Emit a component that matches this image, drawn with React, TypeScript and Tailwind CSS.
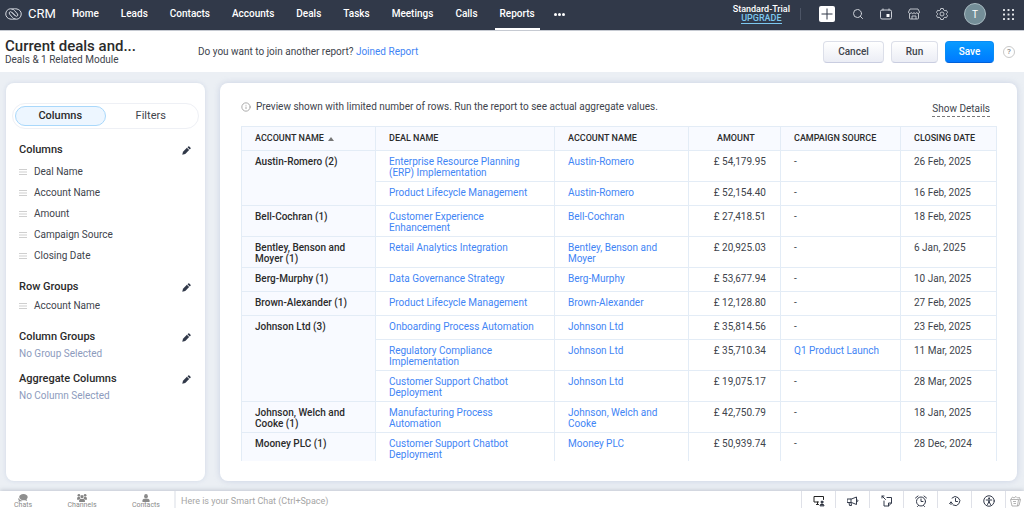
import { useState } from 'react';
import type { ReactNode } from 'react';
import clsx from 'clsx';
import { Search, Info } from 'lucide-react';

const navItems = ['Home', 'Leads', 'Contacts', 'Accounts', 'Deals', 'Tasks', 'Meetings', 'Calls', 'Reports'];

const reportColumns = ['Deal Name', 'Account Name', 'Amount', 'Campaign Source', 'Closing Date'];

type Deal = {
    name: string;
    account: string;
    amount: string;
    campaign?: string;
    date: string;
};

const groups: { label: string; deals: Deal[] }[] = [
    {
        label: 'Austin-Romero (2)',
        deals: [
            { name: 'Enterprise Resource Planning (ERP) Implementation', account: 'Austin-Romero', amount: '£ 54,179.95', date: '26 Feb, 2025' },
            { name: 'Product Lifecycle Management', account: 'Austin-Romero', amount: '£ 52,154.40', date: '16 Feb, 2025' },
        ],
    },
    {
        label: 'Bell-Cochran (1)',
        deals: [{ name: 'Customer Experience Enhancement', account: 'Bell-Cochran', amount: '£ 27,418.51', date: '18 Feb, 2025' }],
    },
    {
        label: 'Bentley, Benson and Moyer (1)',
        deals: [{ name: 'Retail Analytics Integration', account: 'Bentley, Benson and Moyer', amount: '£ 20,925.03', date: '6 Jan, 2025' }],
    },
    {
        label: 'Berg-Murphy (1)',
        deals: [{ name: 'Data Governance Strategy', account: 'Berg-Murphy', amount: '£ 53,677.94', date: '10 Jan, 2025' }],
    },
    {
        label: 'Brown-Alexander (1)',
        deals: [{ name: 'Product Lifecycle Management', account: 'Brown-Alexander', amount: '£ 12,128.80', date: '27 Feb, 2025' }],
    },
    {
        label: 'Johnson Ltd (3)',
        deals: [
            { name: 'Onboarding Process Automation', account: 'Johnson Ltd', amount: '£ 35,814.56', date: '23 Feb, 2025' },
            { name: 'Regulatory Compliance Implementation', account: 'Johnson Ltd', amount: '£ 35,710.34', campaign: 'Q1 Product Launch', date: '11 Mar, 2025' },
            { name: 'Customer Support Chatbot Deployment', account: 'Johnson Ltd', amount: '£ 19,075.17', date: '28 Mar, 2025' },
        ],
    },
    {
        label: 'Johnson, Welch and Cooke (1)',
        deals: [{ name: 'Manufacturing Process Automation', account: 'Johnson, Welch and Cooke', amount: '£ 42,750.79', date: '18 Jan, 2025' }],
    },
    {
        label: 'Mooney PLC (1)',
        deals: [{ name: 'Customer Support Chatbot Deployment', account: 'Mooney PLC', amount: '£ 50,939.74', date: '28 Dec, 2024' }],
    },
];

function Logo() {
    return (
        <svg width="17" height="12" viewBox="0 0 34 24" fill="none" stroke="#d5d9e0" strokeWidth="2" strokeLinecap="round">
            <path d="M20 21.5C17 23 13 22.600 10 22C5 21 1.500 17 1.500 12C1.500 6 6 1.500 11.500 1.500C15 1.500 17 3 19 5L25 12C27 15 24 18 21 16L14 9" />
            <path d="M14 2.500C17 1 21 1.400 24 2C29 3 32.500 7 32.500 12C32.500 18 28 22.500 22.500 22.500C19 22.500 17 21 15 19L9 12C7 9 10 6 13 8L20 15" />
        </svg>
    );
}

function PencilIcon() {
    return (
        <svg width="9" height="9" viewBox="0 0 18 18" fill="#313949">
            <path d="M.5 17.500l1.500-6L9.800 3.700l4.500 4.500L6.500 16z" />
            <path d="M11 2.500l1.500-1.500a1.500 1.500 0 0 1 2.100 0l2.400 2.400a1.500 1.500 0 0 1 0 2.100l-1.500 1.500z" />
        </svg>
    );
}

function CalendarIcon() {
    return (
        <svg width="12" height="12" viewBox="0 0 24 24" fill="none" stroke="#cdd1d8" strokeWidth="2">
            <rect x="1" y="4" width="22" height="18" rx="3" />
            <path d="M6 1v4M18 1v4" />
            <rect x="14" y="13" width="4" height="4" fill="#fff" stroke="#fff" />
        </svg>
    );
}

function MarketplaceIcon() {
    return (
        <svg width="12" height="12" viewBox="0 0 24 24" fill="none" stroke="#cdd1d8" strokeWidth="1.800" strokeLinejoin="round">
            <path d="M4 2h16l3 6c0 4-5 4-5.500 1C17 12 12.500 12 12 9c-.5 3-5 3-5.500 0C6 12 1 12 1 8z" />
            <path d="M3 11v9a2 2 0 0 0 2 2h14a2 2 0 0 0 2-2v-9M8 22v-6h8v6" />
        </svg>
    );
}

function GearIcon() {
    return (
        <svg width="12" height="12" viewBox="0 0 24 24" fill="none" stroke="#cdd1d8" strokeWidth="1.800" strokeLinejoin="round">
            <path d="M9.500 1h5l.8 3 2.500 1.500 3-.8 2.400 4.200L21 11v2l2.200 2.100-2.400 4.200-3-.8-2.500 1.500-.8 3h-5l-.8-3-2.500-1.500-3 .8L.8 15.100 3 13v-2L.8 8.900l2.400-4.200 3 .8L8.700 4z" />
            <circle cx="12" cy="12" r="4" />
        </svg>
    );
}

function GridIcon() {
    const dots = [0, 9, 18];
    return (
        <svg width="11" height="11" viewBox="0 0 22 22" fill="#e3e6ea">
            {dots.map((y) => dots.map((x) => <rect key={`${x}-${y}`} x={x} y={y} width="4" height="4" rx="1" />))}
        </svg>
    );
}

function HandleIcon() {
    return (
        <svg width="8" height="6" viewBox="0 0 8 6" stroke="#cfcfcf" strokeWidth="1">
            <path d="M0 .5h8M0 3h8M0 5.500h8" />
        </svg>
    );
}

function ChatsIcon() {
    return (
        <svg width="10" height="8" viewBox="0 0 22 18" fill="#8f8f8f">
            <path d="M12 0c5.500 0 9.500 3 9.500 7 0 2.500-1 4-2.500 5l1.500 4-5-2.200c-7 1.400-13-1.800-13-6.800C2.500 3 6.500 0 12 0z" />
            <path d="M1.500 9c1.500 4 5 6 9 6-1.500 1.500-4 1.800-6 1.200L.8 17.800l1-3.300C0 12.500 0 10.500 1.500 9z" />
        </svg>
    );
}

function ChannelsIcon() {
    return (
        <svg width="10" height="8" viewBox="0 0 22 18" fill="#858585">
            <circle cx="4" cy="3" r="3" />
            <circle cx="18" cy="3" r="3" />
            <circle cx="11" cy="6" r="3.600" />
            <path d="M0 13V9.500C0 8 1.500 7 3 7h3l1.500 3.500L4 13zM22 13V9.500C22 8 20.500 7 19 7h-3l-1.500 3.500L18 13z" />
            <path d="M4.500 18v-3c0-2.500 2-4 4-4h5c2 0 4 1.500 4 4v3z" />
        </svg>
    );
}

function ContactsIcon() {
    return (
        <svg width="8" height="8" viewBox="0 0 18 18" fill="#8a8a8a">
            <ellipse cx="9" cy="5" rx="4.200" ry="5" />
            <path d="M1 18v-3.500C1 12 3.500 10.500 6 10.500h6c2.500 0 5 1.500 5 4V18z" />
        </svg>
    );
}

// Shared frame for the line icons in the bottom bar
function ToolIcon({ children }: { children: ReactNode }) {
    return (
        <svg width="12" height="12" viewBox="0 0 24 24" fill="none" stroke="#333a4a" strokeWidth="2" strokeLinecap="round" strokeLinejoin="round">
            {children}
        </svg>
    );
}

const tools: { label: string; icon: ReactNode }[] = [
    {
        label: 'Screen share',
        icon: (
            <ToolIcon>
                <path d="M11 14H2V3h19v6M7 19h4M9 14v5" stroke="#222" />
                <circle cx="18" cy="14" r="2" fill="#222" />
                <path d="M14 21c0-2 2-3 4-3s4 1 4 3z" fill="#222" />
            </ToolIcon>
        ),
    },
    {
        label: 'Announcements',
        icon: (
            <ToolIcon>
                <path d="M1 8h8l10-4v15L9 15H1zM8 8v7M4 15l1 6h4l-1-6M19 9c4 0 4 5 0 5" />
            </ToolIcon>
        ),
    },
    {
        label: 'Sticky notes',
        icon: (
            <ToolIcon>
                <path d="M12 5h9v11l-6 6H6V12M15 22v-6h6" />
                <path d="M2 2l7 7M2 6V2h4" />
            </ToolIcon>
        ),
    },
    {
        label: 'Reminders',
        icon: (
            <ToolIcon>
                <circle cx="12" cy="13" r="9" />
                <path d="M12 8v5h4M1 6l5-4M23 6l-5-4M5 23l2-2M19 23l-2-2" />
            </ToolIcon>
        ),
    },
    {
        label: 'Recent items',
        icon: (
            <ToolIcon>
                <path d="M6 6a9 9 0 1 1 2 14" />
                <path d="M13 7v6h4M1 17l3-3 3 3M4 14v5" />
            </ToolIcon>
        ),
    },
    {
        label: 'Accessibility',
        icon: (
            <ToolIcon>
                <circle cx="12" cy="12" r="10.500" />
                <circle cx="12" cy="6.500" r="1" fill="#333a4a" />
                <path d="M6.500 10h11M12 10v4M12 13l-3 6M12 13l3 6" />
            </ToolIcon>
        ),
    },
];

function TopNav() {
    return (
        <header className="flex h-[30px] shrink-0 items-center bg-[#313949] text-white">
            <a href="#" className="ml-[5px] flex w-[62px] shrink-0 items-center gap-1.5 pb-[2px] text-[13px]">
                <Logo />
                CRM
            </a>
            <nav className="flex h-full items-center gap-3 text-[10px] font-medium">
                {navItems.map((item) => (
                    <a
                        key={item}
                        href="#"
                        className={clsx(
                            'flex h-full items-center border-b-2 px-[5px] pb-[3px] pt-px',
                            item === 'Reports' ? 'border-white' : 'border-transparent'
                        )}
                    >
                        {item}
                    </a>
                ))}
                <button aria-label="More modules" className="ml-[2px] flex gap-px pb-px">
                    <span className="size-[3px] rounded-full bg-white" />
                    <span className="size-[3px] rounded-full bg-white" />
                    <span className="size-[3px] rounded-full bg-white" />
                </button>
            </nav>
            <div className="ml-auto mr-2.5 flex items-center pb-[2px]">
                <div className="flex flex-col items-center text-[9px] leading-[9px] font-medium">
                    <span>Standard-Trial</span>
                    <a href="#" className="border-b border-[#7cc7ee] text-[#7cc7ee]">UPGRADE</a>
                </div>
                <span className="ml-2.5 h-3 w-px bg-[#4d5566]" />
                <button aria-label="Create" className="ml-[18px] flex size-4 items-center justify-center rounded-[2px] bg-white">
                    <svg width="12" height="12" viewBox="0 0 12 12" stroke="#313949" strokeWidth="1">
                        <path d="M6 .5v11M.5 6h11" />
                    </svg>
                </button>
                <button aria-label="Search" className="ml-[17px]"><Search size={12} color="#cdd1d8" strokeWidth={2} /></button>
                <button aria-label="Calendar" className="ml-4"><CalendarIcon /></button>
                <button aria-label="Marketplace" className="ml-4"><MarketplaceIcon /></button>
                <button aria-label="Settings" className="ml-4"><GearIcon /></button>
                <button aria-label="Profile" className="ml-4 flex size-[22px] items-center justify-center rounded-full border border-[#a9bbc2] bg-[#748e98] text-[10px]">T</button>
                <button aria-label="All apps" className="ml-[17px]"><GridIcon /></button>
            </div>
        </header>
    );
}

function ReportBar() {
    return (
        <div className="flex h-[42px] shrink-0 items-center border-t border-[#c6cad2] bg-white pr-[9px]">
            <div className="w-[198px] shrink-0 pl-[5px]">
                <h1 className="text-[15px] leading-[16px] font-medium text-[#2b2b2b]">Current deals and...</h1>
                <p className="text-[10px] leading-[12px]">Deals &amp; 1 Related Module</p>
            </div>
            <p className="text-[10px]">
                Do you want to join another report? <a href="#" className="text-[#3f85f5]">Joined Report</a>
            </p>
            <div className="ml-auto flex items-center text-[10px] font-medium">
                <button className="h-[22px] w-[61px] rounded border border-[#dcdfe9] border-b-[#c9cde0] bg-linear-to-b from-white to-[#ebedf5]">Cancel</button>
                <button className="ml-[7px] h-[22px] w-[47px] rounded border border-[#dcdfe9] border-b-[#c9cde0] bg-linear-to-b from-white to-[#ebedf5]">Run</button>
                <button className="ml-[7px] h-[22px] w-[49px] rounded border border-[#0a8cf5] border-b-[#0060d8] bg-linear-to-b from-[#0a9bff] to-[#0279ff] text-white">Save</button>
                <button aria-label="Help" className="ml-[9px] flex size-3 items-center justify-center rounded-full border border-[#c9c9c9] text-[8px] text-[#8a8a8a]">?</button>
            </div>
        </div>
    );
}

function SectionHeader({ title }: { title: string }) {
    return (
        <div className="flex h-4 items-center justify-between pr-[5px]">
            <h2 className="text-[11px] font-medium text-[#2b2b2b]">{title}</h2>
            <button aria-label={`Edit ${title}`}><PencilIcon /></button>
        </div>
    );
}

function FieldRow({ name }: { name: string }) {
    return (
        <li className="flex h-[21px] items-center gap-[7px]">
            <HandleIcon />
            {name}
        </li>
    );
}

function Sidebar() {
    const [tab, setTab] = useState('Columns');

    return (
        <aside className="w-[199px] shrink-0 overflow-hidden rounded-lg bg-white text-[10px] shadow-[0_0_4px_rgba(170,185,215,0.4)]">
            <div className="mx-1.5 mt-5 flex h-[26px] items-center rounded-full border border-[#eef0f5] px-[2px]">
                {['Columns', 'Filters'].map((name) => (
                    <button
                        key={name}
                        onClick={() => setTab(name)}
                        className={clsx(
                            'h-5 flex-1 rounded-full border text-[11px]',
                            tab === name ? 'border-[#a9d8fb] bg-[#edf6ff] font-medium text-[#2b2b2b]' : 'border-transparent'
                        )}
                    >
                        {name}
                    </button>
                ))}
            </div>
            <div className="flex flex-col pl-[13px] pr-[9px] pt-[13px]">
                <SectionHeader title="Columns" />
                <ul className="pt-[3px]">
                    {reportColumns.map((name) => <FieldRow key={name} name={name} />)}
                </ul>
                <div className="pt-[13px]">
                    <SectionHeader title="Row Groups" />
                    <ul>
                        <FieldRow name="Account Name" />
                    </ul>
                </div>
                <div className="pt-[13px]">
                    <SectionHeader title="Column Groups" />
                    <p className="pt-[2px] leading-[14px] text-[#8d9bbd]">No Group Selected</p>
                </div>
                <div className="pt-2.5">
                    <SectionHeader title="Aggregate Columns" />
                    <p className="pt-[2px] leading-[14px] text-[#8d9bbd]">No Column Selected</p>
                </div>
            </div>
        </aside>
    );
}

const cell = 'h-6 border border-[#e3ecf6] pl-[13px] pt-[5px] pb-[3px] align-top';
const headCell = 'h-6 border border-[#e3ecf6] px-[13px] text-left align-middle font-medium whitespace-nowrap';

function ReportTable() {
    return (
        <table className="w-full table-fixed border-collapse text-[10px] leading-[11px]">
            <colgroup>
                <col className="w-[134px]" />
                <col className="w-[179px]" />
                <col className="w-[134px]" />
                <col className="w-[92px]" />
                <col className="w-[120px]" />
                <col className="w-[96px]" />
            </colgroup>
            <thead className="bg-[#f8faff] text-[9px] text-[#2b2b2b]">
                <tr>
                    <th className={headCell}>
                        <span className="flex items-center gap-1">
                            ACCOUNT NAME
                            <svg width="6" height="4" viewBox="0 0 6 4" fill="#777"><path d="M0 4l3-4 3 4z" /></svg>
                        </span>
                    </th>
                    <th className={headCell}>DEAL NAME</th>
                    <th className={headCell}>ACCOUNT NAME</th>
                    <th className="h-6 border border-[#e3ecf6] pl-7 text-left font-medium">AMOUNT</th>
                    <th className={headCell}>CAMPAIGN SOURCE</th>
                    <th className={headCell}>CLOSING DATE</th>
                </tr>
            </thead>
            <tbody>
                {groups.map((group) =>
                    group.deals.map((deal, i) => (
                        <tr key={`${group.label}-${i}`}>
                            {i === 0 && (
                                <th rowSpan={group.deals.length} className={clsx(cell, 'bg-[#f8faff] pr-3 text-left font-medium text-[#2b2b2b]')}>
                                    {group.label}
                                </th>
                            )}
                            <td className={clsx(cell, 'pr-3')}><a href="#" className="text-[#3f85f5]">{deal.name}</a></td>
                            <td className={clsx(cell, 'pr-3')}><a href="#" className="text-[#3f85f5]">{deal.account}</a></td>
                            <td className={clsx(cell, 'pr-3.5 text-right')}>{deal.amount}</td>
                            <td className={clsx(cell, 'pr-3')}>{deal.campaign ? <a href="#" className="text-[#3f85f5]">{deal.campaign}</a> : '-'}</td>
                            <td className={clsx(cell, 'pr-3')}>{deal.date}</td>
                        </tr>
                    ))
                )}
            </tbody>
        </table>
    );
}

function ReportPreview() {
    return (
        <section className="flex min-w-0 flex-1 flex-col rounded-lg bg-white pt-4 pr-5 pb-5 pl-[21px] shadow-[0_0_6px_rgba(150,165,200,0.4)]">
            <div className="flex h-[27px] shrink-0 items-start justify-between text-[10px]">
                <p className="flex h-[15px] items-center gap-[5px]">
                    <Info size={10} color="#9a9a9a" strokeWidth={2} />
                    Preview shown with limited number of rows. Run the report to see actual aggregate values.
                </p>
                <button className="mt-[2px] mr-[7px] border-b border-dashed border-[#777] leading-[15px]">Show Details</button>
            </div>
            <div className="min-h-0 flex-1 overflow-hidden pr-px">
                <ReportTable />
            </div>
        </section>
    );
}

function ChatBar() {
    return (
        <footer className="flex h-[17px] shrink-0 overflow-hidden bg-white text-[#8a8a8a] shadow-[0_-1px_4px_rgba(120,130,150,0.35)]">
            <div className="flex w-[176px] shrink-0 items-start justify-between border-r-2 border-[#eceef2] pt-[3px] pl-[14px] pr-[14px] text-[7px] leading-[6px]">
                <button className="flex flex-col items-center"><ChatsIcon />Chats</button>
                <button className="flex flex-col items-center"><ChannelsIcon />Channels</button>
                <button className="flex flex-col items-center"><ContactsIcon />Contacts</button>
            </div>
            <input
                aria-label="Smart Chat"
                placeholder="Here is your Smart Chat (Ctrl+Space)"
                className="h-5 min-w-0 flex-1 px-[5px] text-[9px] outline-none placeholder:text-[#a5a5a5]"
            />
            <div className="flex">
                {tools.map((tool) => (
                    <button key={tool.label} aria-label={tool.label} className="flex h-5 w-[34px] items-center justify-center border-l border-[#dfe1e8]">
                        {tool.icon}
                    </button>
                ))}
                <button aria-label="Trash" className="flex h-5 w-[19px] items-center justify-center border-l border-[#dfe1e8]">
                    <svg width="11" height="11" viewBox="0 0 22 22" fill="none" stroke="#999" strokeWidth="1.500" strokeLinejoin="round">
                        <path d="M2 6l3-4 3 2 4-3 3 3 4-1 1 4M1 7h16l-2 13H4zM17 8l4-1-3 12-3 1M6 11h6M7 15h5" />
                    </svg>
                </button>
            </div>
        </footer>
    );
}

export default function App() {
    return (
        <div className="flex h-screen flex-col overflow-hidden bg-[#ebeff4] font-[Roboto,sans-serif] text-[#40444c]">
            <TopNav />
            <ReportBar />
            <main className="flex min-h-0 flex-1 gap-[15px] pt-[11px] pr-[7px] pb-2.5 pl-1.5">
                <Sidebar />
                <ReportPreview />
            </main>
            <ChatBar />
        </div>
    );
}
